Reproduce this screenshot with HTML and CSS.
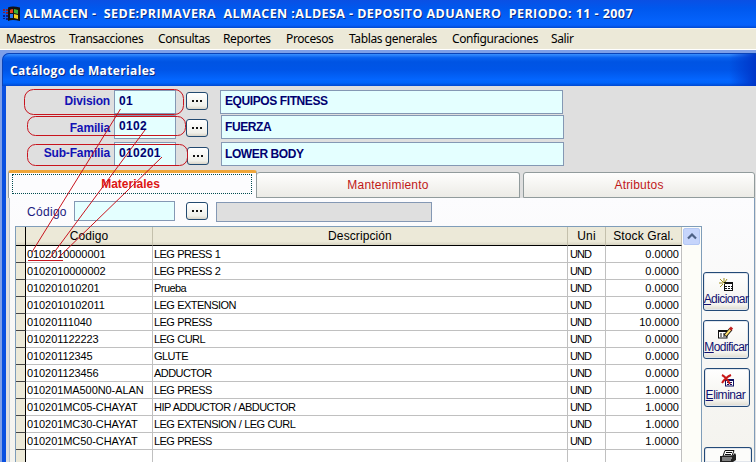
FILE: index.html
```html
<!DOCTYPE html>
<html lang="es">
<head>
<meta charset="utf-8">
<title>Almacen</title>
<link rel="stylesheet" href="styles.css">
</head>
<body>
<header class="titlebar">
  <svg class="flag" width="18" height="16" viewBox="0 0 18 16">
    <path d="M6 1.500 Q10 -.5 18 1.500 V15 Q10 13 6 15Z" fill="#111"/>
    <path d="M8 4 Q9 3 11 3 V7 H8Z" fill="#e04020"/><path d="M12 3 L16 4 V8 L12 7Z" fill="#40b030"/>
    <path d="M8 8 H11 V12 H8Z" fill="#2878f0"/><path d="M12 8 L16 9 V13 L12 12Z" fill="#f0d020"/>
    <path d="M1 3h2v2H1zM4 3h2v2H4zM1 6h2v1H1zM4 6h2v2H4z" fill="#8c2030"/><path d="M1 9h2v2H1zM4 9h2v2H4zM1 12h2v1H1zM4 12h2v2H4z" fill="#101c80"/>
  </svg>
  <span class="apptitle">ALMACEN -&nbsp; SEDE:PRIMAVERA&nbsp; ALMACEN :ALDESA - DEPOSITO ADUANERO&nbsp; PERIODO: 11 - 2007</span>
</header>
<nav class="menu">
  <span class="m1">Maestros</span><span class="m2">Transacciones</span><span class="m3">Consultas</span><span class="m4">Reportes</span><span class="m5">Procesos</span><span class="m6">Tablas generales</span><span class="m7">Configuraciones</span><span class="m8">Salir</span>
</nav>
<main class="window">
  <h1 class="wintitle"><span>Catálogo de Materiales</span></h1>
  <div class="client">
    <section class="filters">
      <div class="frow r1"><label>Division</label><div class="field code">01</div><button class="dots"><i></i><i></i><i></i></button><div class="field name">EQUIPOS FITNESS</div></div>
      <div class="frow r2"><label>Familia</label><div class="field code">0102</div><button class="dots"><i></i><i></i><i></i></button><div class="field name">FUERZA</div></div>
      <div class="frow r3"><label>Sub-Familia</label><div class="field code">010201</div><button class="dots"><i></i><i></i><i></i></button><div class="field name">LOWER BODY</div></div>
    </section>
    <div class="tabs">
      <div class="tab active"><span class="focus">Materiales</span></div>
      <div class="tab second">Mantenimiento</div>
      <div class="tab third">Atributos</div>
    </div>
    <section class="page">
      <div class="search"><label>Código</label><div class="field find"></div><button class="dots"><i></i><i></i><i></i></button><div class="field result"></div></div>
      <div class="body">
        <div class="grid">
          <table>
            <colgroup><col class="c0"><col class="c1"><col class="c2"><col class="c3"><col class="c4"></colgroup>
            <thead><tr><th></th><th>Codigo</th><th>Descripción</th><th>Uni</th><th>Stock Gral.</th></tr></thead>
            <tbody>
              <tr><td></td><td>0102010000001</td><td>LEG PRESS 1</td><td>UND</td><td>0.0000</td></tr>
              <tr><td></td><td>0102010000002</td><td>LEG PRESS 2</td><td>UND</td><td>0.0000</td></tr>
              <tr><td></td><td>010201010201</td><td>Prueba</td><td>UND</td><td>0.0000</td></tr>
              <tr><td></td><td>0102010102011</td><td>LEG EXTENSION</td><td>UND</td><td>0.0000</td></tr>
              <tr><td></td><td>01020111040</td><td>LEG PRESS</td><td>UND</td><td>10.0000</td></tr>
              <tr><td></td><td>010201122223</td><td>LEG CURL</td><td>UND</td><td>0.0000</td></tr>
              <tr><td></td><td>01020112345</td><td>GLUTE</td><td>UND</td><td>0.0000</td></tr>
              <tr><td></td><td>010201123456</td><td>ADDUCTOR</td><td>UND</td><td>0.0000</td></tr>
              <tr><td></td><td>010201MA500N0-ALAN</td><td>LEG PRESS</td><td>UND</td><td>1.0000</td></tr>
              <tr><td></td><td>010201MC05-CHAYAT</td><td>HIP ADDUCTOR / ABDUCTOR</td><td>UND</td><td>1.0000</td></tr>
              <tr><td></td><td>010201MC30-CHAYAT</td><td>LEG EXTENSION / LEG CURL</td><td>UND</td><td>1.0000</td></tr>
              <tr><td></td><td>010201MC50-CHAYAT</td><td>LEG PRESS</td><td>UND</td><td>1.0000</td></tr>
              <tr class="last"><td></td><td></td><td></td><td></td><td></td></tr>
            </tbody>
          </table>
          <div class="scroll"><div class="up"><svg width="10" height="7" viewBox="0 0 10 7"><path d="M1 5.5 5 1.5 9 5.5" fill="none" stroke="#4d6185" stroke-width="2.2"/></svg></div></div>
        </div>
        <aside class="actions">
          <button class="act a1">
            <svg width="14" height="13" viewBox="0 0 14 13"><rect x="5.5" y="5" width="8" height="7.5" fill="#fff" stroke="#111"/><path d="M6 8.5h7M6 10.5h7" stroke="#111" stroke-dasharray="2 1"/><path d="M5 5h9" stroke="#111" stroke-width="2"/><path d="M1 1l5 5M5 0v4M8 1L6 4M0 5h4M1 9l3-3" stroke="#a09020" fill="none"/></svg>
            <span><u>A</u>dicionar</span></button>
          <button class="act a2">
            <svg width="16" height="13" viewBox="0 0 16 13"><rect x=".5" y="4.5" width="8.5" height="7.5" fill="#fff" stroke="#111"/><path d="M0 5h9" stroke="#111" stroke-width="2"/><path d="M2 8h6M2 10h5" stroke="#111" stroke-dasharray="2 1"/><path d="M7 10L13 3" stroke="#111" stroke-width="3.6"/><path d="M7.5 9.3L12.5 3.5" stroke="#ffe070" stroke-width="2"/><path d="M12 3.8L14 1.5" stroke="#c02020" stroke-width="3"/></svg>
            <span><u>M</u>odificar</span></button>
          <button class="act a3">
            <svg width="13" height="13" viewBox="0 0 13 13"><rect x="4.5" y="5.5" width="8" height="6.5" fill="#fff" stroke="#101060"/><path d="M4 6h9" stroke="#101060" stroke-width="2"/><path d="M6 8.5h6M6 10.5h6" stroke="#101060" stroke-dasharray="2 1"/><path d="M1 1Q5 3 9 10M10 1Q5 3 1 9" stroke="#c81818" stroke-width="2" fill="none"/></svg>
            <span><u>E</u>liminar</span></button>
          <button class="act a4">
            <svg width="18" height="12" viewBox="0 0 18 12"><path d="M6 .5H15L13 6H4Z" fill="#fff" stroke="#111"/><path d="M7 2.5h6M6 4.5h6" stroke="#111"/><path d="M1 6H13L16 3 17 5V10L14 12H1Z" fill="#222"/><path d="M3 8h10M3 10h9" stroke="#ddd"/></svg></button>
        </aside>
      </div>
    </section>
  </div>
</main>
<svg class="notes" width="756" height="462" viewBox="0 0 756 462">
  <g fill="none" stroke="#c8141e" stroke-width="1">
    <rect x="24.5" y="89.5" width="159" height="25" rx="9"/>
    <rect x="27.5" y="116.5" width="158" height="19" rx="8"/>
    <rect x="27.5" y="144.5" width="160" height="21" rx="8"/>
    <path d="M120.5 109L32 252M145 130L50 258M162 157L58 258M28 260.5H63"/>
  </g>
</svg>
</body>
</html>
```
FILE: styles.css
```css
* { box-sizing: border-box; }
html { height: 462px; overflow: hidden; }
body { margin: 0; width: 756px; height: 462px; overflow: hidden; position: relative; display: flex; flex-direction: column; background: #7e9fe8; font-family: "Liberation Sans", Arial, sans-serif; color: #000; }
.titlebar { height: 28px; flex: none; display: flex; align-items: center; padding: 0 0 1px 2px; background: linear-gradient(#0a50e4, #0058ee 30%, #0462fb 75%, #0660fa 90%, #0148cf); }
.flag { margin-right: 4px; flex: none; }
.apptitle { font: bold 12.5px/20px "Open Sans", sans-serif; letter-spacing: .43px; color: #fff; text-shadow: 1px 1px #0a2a80; white-space: nowrap; }
.menu { height: 22px; flex: none; display: flex; align-items: center; background: #ece9d8; border-bottom: 1px solid #fff; border-top: 1px solid #f6f4ec; padding-left: 6px; font: 12px/18px "Noto Sans", sans-serif; letter-spacing: -.38px; white-space: nowrap; }
.m1 { width: 63px; } .m2 { width: 89px; } .m3 { width: 65px; } .m4 { width: 63px; } .m5 { width: 63px; } .m6 { width: 103px; } .m7 { width: 99px; }
.window { margin-top: 3px; flex: 1; min-height: 0; display: flex; flex-direction: column; margin-left: 2px; background: #0a50e0; border-radius: 7px 0 0 0; overflow: hidden; }
.wintitle { margin: 0; height: 33px; flex: none; padding: 7px 0 0 7px; border-top: 1px solid #0a43b8; border-left: 1px solid #0a43b8; border-radius: 7px 0 0 0; background: linear-gradient(to right, transparent 726px, #0036c8), linear-gradient(#3a90ff, #0860ee 12%, #0054e3 25%, #0055e8 50%, #0466ff 80%, #0064fa 90%, #0048d0); font: bold 12px/20px "Open Sans", sans-serif; letter-spacing: .36px; color: #fff; text-shadow: 1px 1px #0a2a80; }
.client { margin-left: 4px; flex: 1; min-height: 0; background: #dfdfdf; display: flex; flex-direction: column; overflow: hidden; }
.filters { height: 84px; flex: none; padding-top: 4px; }
.frow { display: flex; align-items: flex-start; }
.frow label { width: 104px; text-align: right; font: bold 12px/14px "Liberation Sans", sans-serif; letter-spacing: -.15px; color: #1212b4; }
.field { background: #e4ffff; border: 1px solid #8498b4; }
.code, .name { font: bold 12px/21px "Liberation Sans", sans-serif; color: #000070; padding-left: 4px; height: 24px; }
.name { letter-spacing: -.4px; width: 343px; padding-left: 4px; margin-left: 12px; }
.code { width: 62px; margin-left: 4px; margin-right: 10px; letter-spacing: .3px; }
.dots { width: 22px; height: 18px; padding: 0; flex: none; display: flex; gap: 2px; align-items: center; justify-content: center; border: 1px solid #234a70; border-radius: 3px; background: linear-gradient(#fff, #f0f0ea 80%, #d8d4c8); }
.dots i { width: 2px; height: 2px; background: #111; }
.r1 { height: 25px; } .r1 label { padding-top: 4px; } .r1 .dots { margin-top: 2px; }
.r2 { height: 27px; } .r2 label { padding-top: 6px; } .r2 .dots { margin-top: 4px; } .r2 .code { line-height: 20px; } .r2 .name, .r3 .name { margin-left: 13px; padding-left: 3px; } .r2 .name { line-height: 22px; }
.r3 label { padding-top: 4px; } .r3 .dots { margin-top: 5px; } .r3 .code { margin-right: 11px; } .r3 .name { margin-left: 12px; } .r3 .code { line-height: 21px; } .r3 .name { line-height: 22px; }
.tabs { height: 28px; flex: none; display: flex; padding-left: 2px; }
.tab { margin-top: 2px; height: 26px; border: 1px solid #919b9c; border-radius: 3px 3px 0 0; background: linear-gradient(#fefefd, #ecebe6); font: 12px/25px "Liberation Sans", sans-serif; letter-spacing: .2px; text-align: center; color: #c01818; }
.active { margin-top: 0; width: 249px; height: 28px; border-top: 3px solid #efa63a; border-bottom: 0; background: #fcfcfe; padding: 1px 4px 0 3px; }
.focus { display: block; height: 20px; border: 1px dotted #004c50; font-weight: bold; line-height: 18px; letter-spacing: 0; padding-right: 3px; color: #dc1414; }
.second { width: 263px; border-left: 0; } .third { width: 232px; margin-left: 3px; }
.page { margin-left: 3px; width: 746px; flex: 1; min-height: 0; border-right: 1px solid #7f9bb8; border-left: 1px solid #b8c4d0; background: linear-gradient(#fcfcfe, #f4f3ee); display: flex; flex-direction: column; overflow: hidden; }
.search { display: flex; height: 28px; flex: none; padding: 3px 0 0 17px; }
.search label { width: 47px; font: 12px/15px "Liberation Sans", sans-serif; letter-spacing: .3px; padding-top: 4px; color: #1a1a80; }
.find { width: 101px; height: 20px; margin: 0 11px 0 0; } .search .dots { margin-top: 1px; }
.result { margin: 1px 0 0 8px; width: 216px; height: 20px; background: #dfdfdf; }
.body { display: flex; flex: 1; min-height: 0; padding-left: 5px; }
.grid { width: 687px; display: flex; border: 1px solid #7f9db9; border-bottom: 0; overflow: hidden; background: #fff; }
table { width: 666px; height: 235px; flex: none; table-layout: fixed; border-collapse: separate; border-spacing: 0; }
.c0 { width: 10px; } .c1 { width: 127px; } .c2 { width: 415px; } .c3 { width: 38px; } .c4 { width: 76px; }
th { height: 19px; padding: 0; font: 12px/17px "Liberation Sans", sans-serif; letter-spacing: .1px; background: linear-gradient(#ece9d8 80%, #d8d4c2); border-bottom: 1px solid #000; border-right: 1px solid #c4c0ac; }
th:first-child, td:first-child { border-right: 1px solid #000; }
td { height: 17px; padding: 0 2px 0 1px; font: 11px/16px "Liberation Sans", sans-serif; letter-spacing: -.55px; border-right: 1px solid #c0c0c0; border-bottom: 1px solid #c0c0c0; white-space: nowrap; overflow: hidden; }
td:nth-child(2) { letter-spacing: -.08px; }
td:nth-child(3) { word-spacing: .4px; }
td:nth-child(4) { padding-left: 2px; letter-spacing: -.9px; }
td:first-child { background: #ece9d8; border-bottom-color: #444; }
td:last-child { text-align: right; letter-spacing: 0; }
.last td { height: 12px; border-bottom: 0; }
.scroll { width: 19px; background: #fdfdf8; padding: 1px; }
.up { width: 17px; height: 17px; border-radius: 2px; border: 1px solid #b4c8f4; background: #c6d5fb; display: flex; align-items: center; justify-content: center; }
.actions { width: 52px; padding-left: 1px; padding-top: 46px; flex: none; }
.act { display: flex; flex-direction: column; align-items: center; width: 46px; height: 39px; padding: 5px 0 0; border: 1px solid #234a78; border-radius: 3px; background: linear-gradient(#fff, #f4f3ee 85%, #dedbd0); box-shadow: inset 0 0 0 1px #e2e6ec; font: 12px/14px "Liberation Sans", sans-serif; color: #101070; white-space: nowrap; }
.act svg { flex: none; } .act span { margin-top: 1px; letter-spacing: -.6px; }
.act.a3 span { letter-spacing: -.45px; padding-right: 3px; }
.a2 { margin-top: 9px; } .a3 { margin: 9px 0 0 1px; } .a4 { margin: 40px 0 0 1px; width: 48px; height: 15px; padding-top: 2px; border-bottom: 0; border-radius: 3px 3px 0 0; background: #fcfcfa; }
.notes { position: absolute; left: 0; top: 0; pointer-events: none; }
```
